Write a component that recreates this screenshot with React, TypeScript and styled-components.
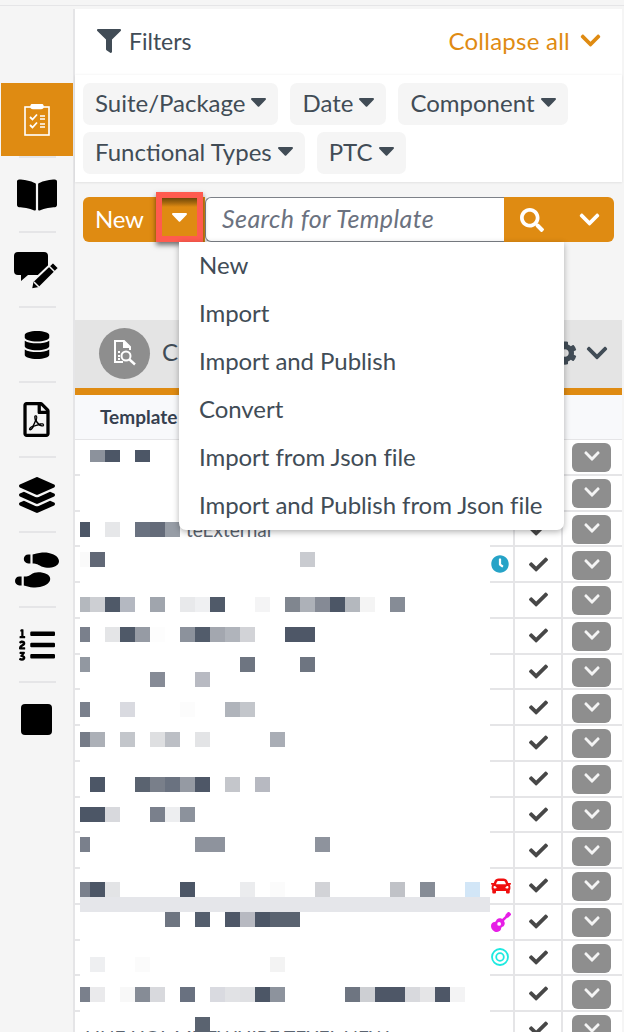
import * as React from "react";

import styled, { createGlobalStyle } from "styled-components";
import {
  FaBookOpen,
  FaCar,
  FaCheck,
  FaChevronDown,
  FaClock,
  FaCog,
  FaDatabase,
  FaFilter,
  FaGuitar,
  FaLayerGroup,
  FaListOl,
  FaRegFilePdf,
  FaSearch,
  FaShoePrints,
} from "react-icons/fa";

const ORANGE = "#df8b12";
const TEXT = "#414c56";
const LINE = "#e5e5e7";

const GlobalStyle = createGlobalStyle`
  html, body {
    margin: 0;
    padding: 0;
    height: 1032px;
    overflow: hidden;
    background: #f5f5f5;
  }
  * {
    box-sizing: border-box;
  }
`;

const Root = styled.div`
  display: flex;
  flex-direction: column;
  width: 624px;
  height: 1032px;
  overflow: hidden;
  font-family: Lato, "Open Sans", sans-serif;
  color: ${TEXT};
`;

const TopLine = styled.div`
  flex: none;
  height: 9px;
  border-top: 5px solid #f5f5f5;
  border-bottom: 3px solid #f5f5f5;
  background: ${LINE};
`;

const Body = styled.div`
  display: flex;
  flex: 1;
  min-height: 0;
`;

const Sidebar = styled.nav`
  flex: none;
  display: flex;
  flex-direction: column;
  width: 75px;
  padding: 74px 0 0 1px;
  border-right: 2px solid ${LINE};
`;

const NavItem = styled.div<{ $active?: boolean }>`
  position: relative;
  flex: none;
  display: flex;
  align-items: center;
  justify-content: center;
  height: ${p => (p.$active ? "73px" : "75px")};
  margin-bottom: ${p => (p.$active ? "1px" : "0")};
  padding-right: 1px;
  background: ${p => (p.$active ? ORANGE : "transparent")};
  color: #000;

  &:not(:last-child)::after {
    content: "";
    position: absolute;
    left: 18px;
    bottom: ${p => (p.$active ? "-2px" : "-1px")};
    width: 37px;
    height: 2px;
    background: ${LINE};
  }
`;

const Square = styled.div`
  width: 31px;
  height: 31px;
  border-radius: 4px;
  background: #000;
`;

const Main = styled.main`
  flex: none;
  display: flex;
  flex-direction: column;
  width: 547px;
`;

const FilterHeader = styled.div`
  flex: none;
  display: flex;
  align-items: center;
  justify-content: space-between;
  height: 66px;
  padding: 0 22px 2px 22px;
  background: #fff;
`;

const FilterTitle = styled.div`
  display: flex;
  align-items: center;
  gap: 8px;
  font-size: 23px;
`;

const CollapseAll = styled.div`
  display: flex;
  align-items: center;
  gap: 9px;
  margin-right: -2px;
  padding-bottom: 2px;
  color: ${ORANGE};
  font-size: 24px;
  letter-spacing: 0.25px;
`;

const ChipPanel = styled.div`
  flex: none;
  display: flex;
  flex-wrap: wrap;
  align-content: flex-start;
  gap: 7px 12px;
  height: 107px;
  padding: 8px 8px 0;
  background: #fff;
  box-shadow: 0 1px 2px rgba(0, 0, 0, 0.08), 0 -1px 2px rgba(0, 0, 0, 0.03);
`;

const Chip = styled.div`
  display: flex;
  align-items: center;
  gap: 6px;
  height: 42px;
  padding: 0 12px 4px;
  border-radius: 7px;
  background: #f5f5f5;
  font-size: 24px;
  white-space: nowrap;
`;

const Toolbar = styled.div`
  position: relative;
  flex: none;
  display: flex;
  width: 531px;
  height: 45px;
  margin: 15px 0 78px 8px;
`;

const NewButton = styled.div`
  display: flex;
  align-items: center;
  width: 122px;
  padding: 0 0 3px 12px;
  border-radius: 6px 0 0 6px;
  background: ${ORANGE};
  color: #fff;
  font-size: 24px;
  letter-spacing: -0.2px;
`;

const Highlight = styled.div`
  position: absolute;
  left: 73px;
  top: -5px;
  display: flex;
  align-items: center;
  justify-content: center;
  width: 47px;
  height: 50px;
  border: 6px solid #ff5b4f;
  background: linear-gradient(#6d4708 0, #a96a0e 5px, ${ORANGE} 9px);
  color: #fff;
  box-shadow: 0 3px 5px rgba(0, 0, 0, 0.55);
`;

const SearchField = styled.div`
  display: flex;
  align-items: center;
  width: 299px;
  padding: 0 0 3px 16px;
  border: 1px solid #7d8188;
  border-right: 0;
  border-radius: 6px 0 0 6px;
  background: #fff;
  color: #6b7280;
  font-size: 25px;
  font-style: italic;
  letter-spacing: 0.4px;
`;

const SearchButton = styled.div`
  display: flex;
  align-items: center;
  justify-content: center;
  width: 60px;
  padding-right: 4px;
  background: ${ORANGE};
  color: #fff;
`;

const ExpandButton = styled.div`
  display: flex;
  align-items: center;
  justify-content: center;
  width: 50px;
  border-radius: 0 6px 6px 0;
  background: ${ORANGE};
  color: #fff;
`;

const Menu = styled.div`
  position: absolute;
  left: 96px;
  top: 45px;
  z-index: 5;
  width: 385px;
  height: 288px;
  border-radius: 0 0 7px 7px;
  background: #fff;
  box-shadow: 0 2px 6px rgba(0, 0, 0, 0.3);
`;

const MenuItem = styled.div`
  display: flex;
  align-items: center;
  height: 48px;
  padding: 0 0 4px 20px;
  font-size: 24px;
  letter-spacing: -0.06px;
  white-space: nowrap;
`;

const SectionHeader = styled.div`
  flex: none;
  display: flex;
  align-items: center;
  height: 68px;
  padding: 0 13px 2px 24px;
  background: #e4e4e4;
`;

const Avatar = styled.div`
  display: flex;
  align-items: center;
  justify-content: center;
  width: 51px;
  height: 51px;
  border-radius: 50%;
  background: #8e8e8e;
`;

const SectionName = styled.div`
  flex: 1;
  margin: 0 0 3px 12px;
  font-size: 24px;
`;

const SectionActions = styled.div`
  display: flex;
  align-items: center;
  gap: 8px;
  color: ${TEXT};
`;

const AccentBar = styled.div`
  flex: none;
  height: 7px;
  background: ${ORANGE};
`;

const TableHeader = styled.div`
  flex: none;
  display: flex;
  align-items: center;
  height: 45px;
  padding: 0 0 1px 25px;
  border-bottom: 1px solid ${LINE};
  background: #f8f9fb;
  color: #36404f;
  font-size: 19px;
  font-weight: 700;
`;

const TableBody = styled.div`
  position: relative;
  flex: 1;
  min-height: 0;
  background: #fff;
`;

const Row = styled.div`
  display: flex;
  height: 35.75px;
`;

const Tick = styled.div`
  flex: none;
  width: 5px;
  border-bottom: 2px solid ${LINE};
`;

const NameCell = styled.div<{ $indent?: number; $drop?: number }>`
  position: relative;
  z-index: 1;
  flex: none;
  width: 410px;
  padding: ${p => p.$drop ?? 0}px 0 0 ${p => p.$indent ?? 5}px;
  font-size: 19px;
  line-height: 36px;
  color: #5b6470;
  white-space: nowrap;
`;

const BadgeCell = styled.div<{ $color?: string }>`
  flex: none;
  display: flex;
  align-items: center;
  width: 25px;
  padding-left: 1px;
  border-right: 2px solid ${LINE};
  border-bottom: 2px solid ${LINE};
  color: ${p => p.$color ?? "inherit"};
`;

const CheckCell = styled.div`
  flex: none;
  display: flex;
  align-items: center;
  justify-content: center;
  width: 48px;
  border-right: 2px solid ${LINE};
  border-bottom: 2px solid ${LINE};
  color: #474747;
`;

const ActionCell = styled.div`
  flex: none;
  display: flex;
  align-items: center;
  width: 59px;
  padding: 2px 0 0 9px;
  border-bottom: 2px solid ${LINE};
`;

const RowButton = styled.div`
  display: flex;
  align-items: flex-start;
  justify-content: center;
  width: 39px;
  height: 29px;
  padding-top: 4px;
  border-radius: 6px;
  background: #8e8e8e;
  color: #f4f4f4;
`;

// pixelated (redacted) template names that lie over the name column
const Mosaic = styled.svg`
  position: absolute;
  left: 0;
  top: 0;
  pointer-events: none;
`;

const Caret = ({ width = 15 }: { width?: number }) => (
  <svg width={width} height={width * 0.6} viewBox="0 0 15 9" fill="currentColor">
    <path d="M1 0h13a1 1 0 0 1 .7 1.700L8.200 8.500a1 1 0 0 1-1.400 0L.3 1.700A1 1 0 0 1 1 0z" />
  </svg>
);

const ClipboardIcon = () => (
  <svg width="26" height="32" viewBox="0 0 26 32" fill="none" stroke="#fff" strokeWidth="1.6">
    <rect x="1" y="3" width="24" height="28" />
    <rect x="7" y="0.5" width="12" height="4" rx="2" fill="#fff" />
    <path d="M6 13l2.500 2.500L13 10.500M6 21l2.500 2.500L13 18.500" strokeWidth="1.800" />
    <path d="M16 12h5M16 15h5M16 20h5M16 23h5" />
  </svg>
);

const CommentPenIcon = () => (
  <svg width="46" height="38" viewBox="0 0 46 38" fill="#000">
    <path d="M4 1h26a4 4 0 0 1 4 4v15a4 4 0 0 1-4 4H14l-7 6v-6H4a4 4 0 0 1-4-4V5a4 4 0 0 1 4-4z" />
    <path
      d="M39 11l6 6-20 20-8 1.500 1.500-8z"
      stroke="#f5f5f5"
      strokeWidth="2"
      strokeLinejoin="round"
    />
    <path d="M20 31l5 5" stroke="#f5f5f5" strokeWidth="1.500" />
    <path d="M35 15l6 6" stroke="#f5f5f5" strokeWidth="1.500" />
  </svg>
);

const DocSearchIcon = () => (
  <svg width="24" height="26" viewBox="0 0 24 26" fill="none" stroke="#fff" strokeWidth="2">
    <path d="M10 22H2V1h9l6 6v3" />
    <path d="M11 1v6h6" fill="#fff" />
    <circle cx="13" cy="16" r="4.500" />
    <path d="M16.500 19.500L22 24.500" strokeWidth="2.400" />
    <path d="M5 12h2M5 16h2M5 19h2" />
  </svg>
);

const TargetIcon = () => (
  <svg width="18" height="18" viewBox="0 0 18 18" fill="none" stroke="#1de9e0" strokeWidth="1.800">
    <circle cx="9" cy="9" r="8" />
    <circle cx="9" cy="9" r="3.800" />
  </svg>
);

const navItems = [
  <FaBookOpen size={40} />,
  <CommentPenIcon />,
  <FaDatabase size={28} />,
  <FaRegFilePdf size={35} />,
  <FaLayerGroup size={36} />,
  <FaShoePrints size={44} />,
  <FaListOl size={36} />,
  <Square />,
];

const chips = ["Suite/Package", "Date", "Component", "Functional Types", "PTC"];

const menuItems = [
  "New",
  "Import",
  "Import and Publish",
  "Convert",
  "Import from Json file",
  "Import and Publish from Json file",
];

const badges: Record<number, { color: string; icon: React.ReactNode }> = {
  3: { color: "#26a3c7", icon: <FaClock size={18} /> },
  12: { color: "#f00f0f", icon: <FaCar size={20} /> },
  13: { color: "#e61ee6", icon: <FaGuitar size={20} /> },
  14: { color: "#1de9e0", icon: <TargetIcon /> },
};

const names: Record<number, { text: string; indent: number; drop?: number }> = {
  2: { text: "teExternal", indent: 106 },
  16: { text: "LINE HOL MNEWHIRE TEXEL NEW", indent: 5, drop: 8 },
};

// [top of the tile in the page, [left of the tile, colour] ...]
const tiles: [number, [number, string][]][] = [
  [450, [[90, "#8c929c"], [105, "#4c5666"], [135, "#4c5666"]]],
  [522, [[80, "#4c5666"], [105, "#e6e7e9"], [135, "#6a7280"], [150, "#646b79"], [165, "#979da6"]]],
  [552, [[80, "#fafafa"], [90, "#616876"], [300, "#c9cbd0"]]],
  [597, [[80, "#b4b8be"], [90, "#cdcfd3"], [105, "#4f5968"], [120, "#b4b8c1"], [150, "#a0a5ad"], [180, "#e8e9eb"], [195, "#eff0f2"], [210, "#505a69"], [255, "#f4f4f5"], [285, "#80868f"], [300, "#adb1b8"], [315, "#858a95"], [330, "#4c5666"], [345, "#b4b8be"], [360, "#f4f4f4"], [390, "#868c96"]]],
  [627, [[80, "#7a808c"], [105, "#e4e5e7"], [120, "#4f5968"], [135, "#969ba4"], [150, "#fdfdfd"], [180, "#8c929c"], [195, "#525c6b"], [210, "#a3a7af"], [225, "#b0b4bb"], [240, "#d2d3d7"], [285, "#4e5767"], [300, "#4e5767"]]],
  [657, [[80, "#9298a1"], [240, "#6e7581"], [300, "#6e7581"]]],
  [672, [[150, "#868b96"], [195, "#b8bac2"]]],
  [702, [[80, "#7a808c"], [120, "#d9dae0"], [180, "#fcfcfc"], [225, "#b0b4bb"], [240, "#c3c6cb"]]],
  [732, [[80, "#767c88"], [90, "#acb0b7"], [120, "#c3c6cb"], [150, "#dedfe1"], [165, "#bcbfc5"], [195, "#e3e4e6"], [270, "#a9adb5"]]],
  [777, [[90, "#4c5666"], [135, "#5a6370"], [150, "#797f8a"], [165, "#6a7280"], [180, "#959aa3"], [195, "#4e5767"], [225, "#c4c6cb"], [255, "#b7b9c1"]]],
  [807, [[80, "#4c5666"], [90, "#4c5666"], [105, "#d8d9dd"], [150, "#7a808c"], [165, "#edeef0"], [180, "#8c929c"]]],
  [837, [[80, "#7a808c"], [195, "#8e939d"], [210, "#8e939d"], [315, "#8e939d"]]],
  [882, [[80, "#7a808c"], [90, "#4c5666"], [105, "#e3e4e6"], [180, "#4c5666"], [240, "#ebecee"], [270, "#fbfbfb"], [315, "#d2d3d7"], [390, "#c0c2c7"], [420, "#868c96"], [465, "#d2e6f7"]]],
  [912, [[165, "#6e7581"], [195, "#545e6d"], [225, "#4e5767"], [240, "#b7b9c1"], [255, "#4c5666"], [270, "#5a6370"], [285, "#5a6370"]]],
  [957, [[90, "#eeeff1"], [135, "#fbfbfb"], [270, "#f3f3f3"]]],
  [987, [[80, "#7a808c"], [90, "#eaeaec"], [120, "#f8f8f8"], [135, "#868c96"], [150, "#d8d9dd"], [180, "#697180"], [210, "#d9dae0"], [225, "#e1e2e5"], [240, "#dfe0e3"], [255, "#4c5666"], [270, "#8d939d"], [345, "#6e7581"], [360, "#cdcfd3"], [375, "#4e5767"], [390, "#4e5767"], [405, "#d8d9dd"], [420, "#e5e5e7"], [435, "#4e5767"], [450, "#f3f3f4"]]],
  [1017, [[195, "#5a6370"]]],
];

const BODY_LEFT = 75;
const BODY_TOP = 440;

const App: React.FC = () => {
  return (
    <Root>
      <GlobalStyle />
      <TopLine />
      <Body>
        <Sidebar>
          <NavItem $active>
            <ClipboardIcon />
          </NavItem>
          {navItems.map((icon, i) => (
            <NavItem key={i}>{icon}</NavItem>
          ))}
        </Sidebar>
        <Main>
          <FilterHeader>
            <FilterTitle>
              <FaFilter size={24} />
              Filters
            </FilterTitle>
            <CollapseAll>
              Collapse all
              <FaChevronDown size={23} />
            </CollapseAll>
          </FilterHeader>
          <ChipPanel>
            {chips.map(chip => (
              <Chip key={chip}>
                {chip}
                <Caret />
              </Chip>
            ))}
          </ChipPanel>
          <Toolbar>
            <NewButton>New</NewButton>
            <Highlight>
              <Caret />
            </Highlight>
            <SearchField>Search for Template</SearchField>
            <SearchButton>
              <FaSearch size={24} />
            </SearchButton>
            <ExpandButton>
              <FaChevronDown size={23} />
            </ExpandButton>
            <Menu>
              {menuItems.map(item => (
                <MenuItem key={item}>{item}</MenuItem>
              ))}
            </Menu>
          </Toolbar>
          <SectionHeader>
            <Avatar>
              <DocSearchIcon />
            </Avatar>
            <SectionName>C</SectionName>
            <SectionActions>
              <FaCog size={24} />
              <FaChevronDown size={24} />
            </SectionActions>
          </SectionHeader>
          <AccentBar />
          <TableHeader>Template</TableHeader>
          <TableBody>
            {Array.from({ length: 17 }, (_, i) => (
              <Row key={i}>
                <Tick />
                <NameCell $indent={names[i]?.indent} $drop={names[i]?.drop}>
                  {names[i]?.text}
                </NameCell>
                <BadgeCell $color={badges[i]?.color}>{badges[i]?.icon}</BadgeCell>
                <CheckCell>
                  <FaCheck size={19} />
                </CheckCell>
                <ActionCell>
                  <RowButton>
                    <FaChevronDown size={18} />
                  </RowButton>
                </ActionCell>
              </Row>
            ))}
            <Mosaic width="420" height="592">
              {tiles.map(([top, cells]) =>
                cells.map(([left, color]) => (
                  <rect
                    key={`${top}-${left}`}
                    x={left - BODY_LEFT}
                    y={top - BODY_TOP}
                    width={left === 80 ? 10 : 15}
                    height={top === 450 ? 12 : 15}
                    fill={color}
                  />
                ))
              )}
              <rect x={5} y={897 - BODY_TOP} width={410} height={15} fill="#e5e6ea" />
            </Mosaic>
          </TableBody>
        </Main>
      </Body>
    </Root>
  );
};

export default App;
